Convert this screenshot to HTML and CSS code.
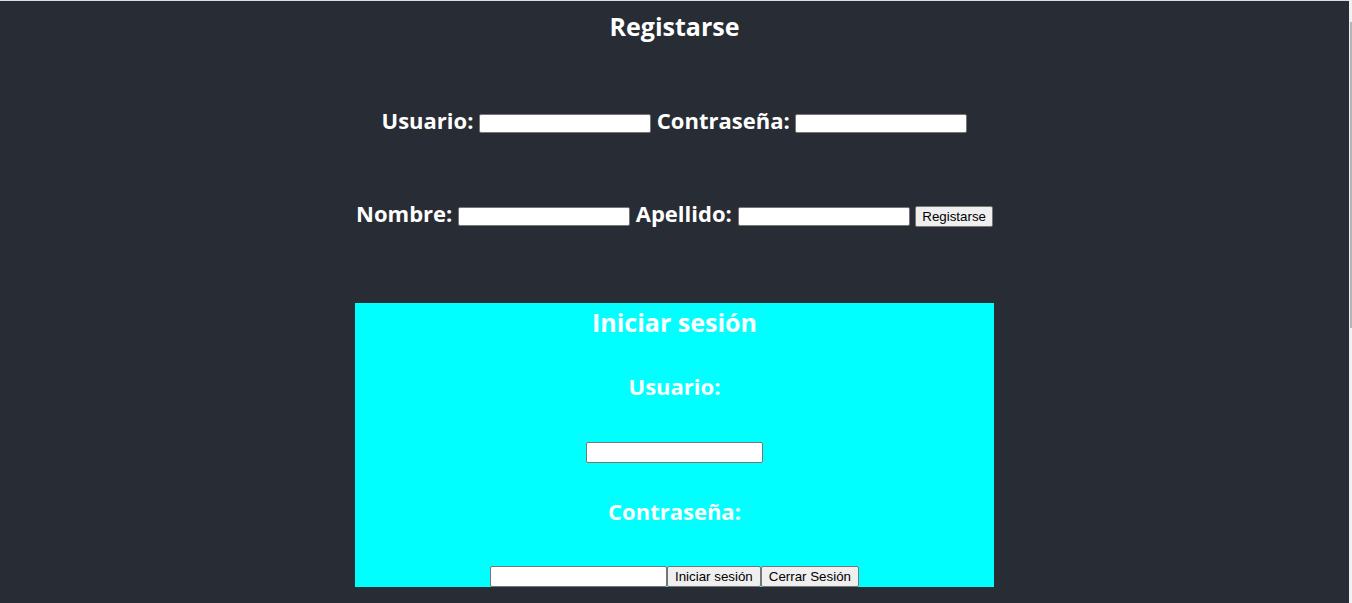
FILE: index.html
```html
<!DOCTYPE html>
<html lang="es">
<head>
<meta charset="utf-8">
<title>Registro</title>
<link rel="stylesheet" href="styles.css">
</head>
<body>
<div class="app">
  <div class="content">
    <h2 class="title">Registarse</h2>
    <div class="row">Usuario: <input class="field" type="text"> Contraseña: <input class="field" type="password"></div>
    <div class="row row-two">Nombre: <input class="field" type="text"> Apellido: <input class="field" type="text"> <button class="btn btn-row">Registarse</button></div>
    <div class="login">
      <h2 class="login-title">Iniciar sesión</h2>
      <div class="login-label">Usuario:</div>
      <div class="login-field"><input class="field field-login" type="text"></div>
      <div class="login-label login-label-pass">Contraseña:</div>
      <div class="login-actions"><input class="field field-login" type="password"><button class="btn">Iniciar sesión</button><button class="btn">Cerrar Sesión</button></div>
    </div>
  </div>
</div>
<div class="scrollbar"><div class="scrollbar-thumb"></div></div>
</body>
</html>
```

FILE: styles.css
```css
html, body {
  margin: 0;
  padding: 0;
  height: 100%;
  background: #282c34;
}
body {
  border-top: 1px solid #dcdcdc;
  box-sizing: border-box;
  overflow: hidden;
  font-family: "Open Sans", "Noto Sans", sans-serif;
  color: #ffffff;
}
.app {
  display: flex;
  flex-direction: column;
  align-items: center;
  padding-right: 3px;
}
.content {
  display: flex;
  flex-direction: column;
  align-items: stretch;
  width: fit-content;
}
.title {
  margin: 9px 0 0;
  font-size: 25px;
  line-height: 32px;
  text-align: center;
  font-weight: 700;
}
.row {
  margin-top: 63px;
  font-size: 22px;
  font-weight: 700;
  line-height: 30px;
  text-align: center;
  white-space: nowrap;
}
.row-two {
  margin-top: 63px;
  padding: 0 1px;
}
.field {
  box-sizing: border-box;
  width: 172px;
  height: 19px;
  margin: 0;
  padding: 1px 2px;
  border: 1px solid #767676;
  border-radius: 2px;
  background: #ffffff;
  font: 13.333px "Liberation Sans", Arial, sans-serif;
  vertical-align: 1px;
}
.field-login {
  width: 177px;
  height: 21px;
  vertical-align: top;
}
.btn {
  box-sizing: border-box;
  height: 21px;
  margin: 0;
  padding: 1px 7px;
  border: 1px solid #767676;
  border-radius: 2px;
  background: #efefef;
  color: #000000;
  font: 13.333px "Liberation Sans", Arial, sans-serif;
  vertical-align: top;
}
.btn-row {
  padding: 1px 6px;
  vertical-align: 1px;
}
.login {
  margin-top: 75px;
  background: #00ffff;
  text-align: center;
  height: 284px;
  display: flex;
  flex-direction: column;
  align-items: center;
}
.login-title {
  margin: 0;
  font-size: 25px;
  line-height: 38px;
  font-weight: 700;
}
.login-label {
  margin-top: 30px;
  font-size: 22px;
  font-weight: 700;
  line-height: 30px;
}
.login-field {
  margin-top: 41px;
  display: flex;
}
.login-label-pass {
  margin-top: 33px;
}
.login-actions {
  margin-top: 40px;
  display: flex;
}
.scrollbar {
  position: fixed;
  top: 0;
  right: 0;
  width: 3px;
  height: 100%;
  background: #f1f1f1;
}
.scrollbar-thumb {
  margin-top: 22px;
  height: 306px;
  background: #b5b5b5;
  width: 2px;
  margin-left: 1px;
}
```
